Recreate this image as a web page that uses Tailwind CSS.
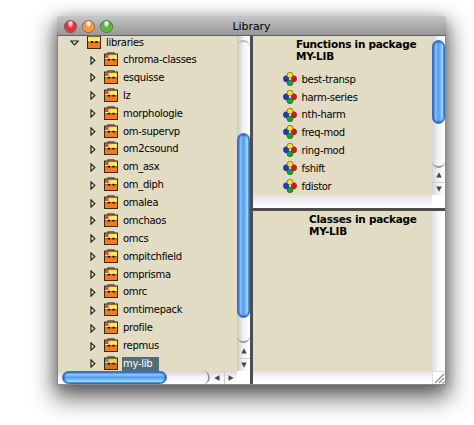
<!DOCTYPE html>
<html lang="en">
<head>
<meta charset="utf-8">
<title>Library</title>
<script src="https://cdn.jsdelivr.net/npm/@tailwindcss/browser@4"></script>
</head>
<body class="w-[474px] h-[425px] overflow-hidden bg-white text-black font-['DejaVu_Sans',Verdana,sans-serif] text-[10px]">
<svg class="absolute w-0 h-0" aria-hidden="true">
  <defs>
    <linearGradient id="yel" x2="0" y2="1"><stop stop-color="#ffdf55"/><stop offset="1" stop-color="#fff083"/></linearGradient>
    <symbol id="case" viewBox="0 0 14 14">
      <path d="M4 2V.8h6V2" fill="none" stroke="#54503f" stroke-width="1.2"/>
      <rect x=".5" y="2" width="13" height="11.5" fill="#f47b20"/>
      <rect x="1" y="2.5" width="12" height="5" fill="url(#yel)"/>
      <rect x="1" y="2.5" width="3.5" height="3.5" fill="currentColor"/>
      <path d="M1 7.7h12" stroke="#5c2c00" stroke-width=".7"/>
      <path d="M4 6.8h2v1.8H4zM8.5 6.8h2v1.8h-2z" fill="#180d00"/>
      <rect x=".5" y="2" width="13" height="11.5" fill="none" stroke="#40280f"/>
    </symbol>
    <symbol id="plaincase" viewBox="0 0 14 14">
      <rect x=".5" y="1" width="13" height="12.5" fill="#f47b20"/>
      <rect x="1" y="1.5" width="12" height="5.5" fill="url(#yel)"/>
      <path d="M1 7h12" stroke="#5c2c00" stroke-width=".7"/>
      <path d="M4 6.1h2v1.8H4zM8.5 6.1h2v1.8h-2z" fill="#180d00"/>
      <rect x=".5" y="1" width="13" height="12.5" fill="none" stroke="#40280f"/>
    </symbol>
    <symbol id="fn" viewBox="0 0 14 14">
      <g stroke-width=".6" stroke="#443f35">
      <circle cx="3.4" cy="6.8" r="3.1" fill="#153bc0"/>
      <circle cx="10.6" cy="6.8" r="3.1" fill="#e80f18"/>
      <circle cx="7" cy="3.3" r="3" fill="#ffe01a"/>
      <circle cx="7" cy="10.7" r="3" fill="#08a926"/></g>
      <circle cx="5" cy="7" r="1.8" fill="#153bc0"/>
      <circle cx="9" cy="7" r="1.8" fill="#e80f18"/>
      <path d="M7 5.7L8.3 7 7 8.3 5.7 7z" fill="#fff"/>
    </symbol>
    <symbol id="tri" viewBox="0 0 6 9"><path d="M1 .9v7.2L4.8 4.5z" fill="#f6f3e6" stroke="#22211d" stroke-width="1.2"/></symbol>
    <symbol id="up" viewBox="0 0 6 6"><path d="M3 .3L5.7 5.5H.3z" fill="#444"/></symbol>
  </defs>
</svg>
<main class="pl-[57px] pt-4">
<div class="w-[389px] h-[369px] flex flex-col rounded-t-[4px] border-x border-b border-[#888] shadow-[0_10px_23px_3px_rgba(0,0,0,0.6),0_3px_12px_rgba(0,0,0,0.2)]">
  <header class="-mx-px h-5 shrink-0 flex items-center rounded-t-[4px] border-t border-[#c5c5c5] border-b border-b-[#626262] bg-linear-to-b from-[#c4c4c4] to-[#979797] pl-[7px] relative">
    <div class="flex gap-[5px]">
      <i class="size-[13px] rounded-full border border-[#80454a] bg-[radial-gradient(ellipse_at_50%_20%,#ffd6d6_0_12%,#e72f3a_42%,#e32a35_65%,#ff9d9d)]"></i>
      <i class="size-[13px] rounded-full border border-[#916034] bg-[radial-gradient(ellipse_at_50%_20%,#fff0da_0_12%,#ed913b_42%,#f4a143_65%,#ffed96)]"></i>
      <i class="size-[13px] rounded-full border border-[#43703a] bg-[radial-gradient(ellipse_at_50%_20%,#e4ffd9_0_12%,#57aa3e_42%,#65b846_65%,#c4f69d)]"></i>
    </div>
    <h1 class="absolute inset-x-0 text-center text-[11px] leading-[18px] top-[1px] tracking-[-0.05px]">Library</h1>
  </header>
  <div class="flex flex-1 min-h-0 bg-[#4d4d4d] gap-[3px]">
    <section class="w-[192px] grid grid-cols-[179px_13px] grid-rows-[335px_13px]">
      <div class="bg-[#e2dcc4] overflow-hidden">
        <div id="tree" class="-mt-[2.4px]">
          <div class="flex h-[17.5px] items-center pl-[12px]">
            <svg class="w-[9px] h-[6px] mt-[1px]" viewBox="0 0 9 6"><path d="M.9 1h7.2L4.5 4.8z" fill="#f6f3e6" stroke="#22211d" stroke-width="1.2"/></svg>
            <svg class="size-3.5 ml-[8px] -mt-[1px]"><use href="#plaincase"/></svg>
            <span class="ml-[5px] tracking-[-0.3px]">libraries</span>
          </div>
        </div>
      </div>
      <div class="flex flex-col bg-linear-to-r from-[#c9c9c9] via-[#f3f3f3] to-white overflow-hidden">
        <div class="h-[97px] rounded-t-full border-t-2 border-[#bbb] mt-1 -mb-1 shrink-0"></div>
        <div class="h-[185px] shrink-0 rounded-full border border-[#3a6cba] bg-[linear-gradient(90deg,#2769d3,#8fc0f4_25%,#559dea_46%,#68b3f8_65%,#a1ddff_85%,#437dca)] shadow-[inset_0_2px_2px_-1px_#1549af,inset_0_-2px_2px_-1px_#1549af]"></div>
        <div class="h-[25px] rounded-b-full border-b-2 border-[#999] shrink-0"></div>
        <div class="h-[15px] flex items-center justify-center"><svg class="size-1.5"><use href="#up"/></svg></div>
        <div class="h-[13px] border-t border-[#ccc] flex items-center justify-center"><svg class="size-1.5 rotate-180"><use href="#up"/></svg></div>
      </div>
      <div class="flex bg-linear-to-b from-[#d7d7d7] via-[#f5f5f5] to-white">
        <div class="w-[4px]"></div>
        <div class="w-[105px] rounded-full border border-[#3a6cba] bg-[linear-gradient(#2769d3,#9ac8f5_25%,#559dea_46%,#68b3f8_65%,#a1e2ff_85%,#437dca)] shadow-[inset_2px_0_2px_-1px_#1549af,inset_-2px_0_2px_-1px_#1549af]"></div>
        <div class="w-[43px] rounded-r-full border-r-2 border-[#999]"></div>
        <div class="w-[14px] flex items-center justify-center"><svg class="size-1.5 -rotate-90"><use href="#up"/></svg></div>
        <div class="w-[13px] border-l border-[#ccc] flex items-center justify-center"><svg class="size-1.5 rotate-90"><use href="#up"/></svg></div>
      </div>
      <div class="bg-white"></div>
    </section>
    <div class="flex-1 flex flex-col gap-[3px]">
      <section class="grid grid-cols-[179px_13px] grid-rows-[159px_13px]">
        <div class="bg-[#e2dcc4] overflow-hidden">
          <h2 class="pl-[43px] pt-[2px] leading-[12px] font-bold text-[10.5px] tracking-[-0.25px]">Functions in package<br>MY-LIB</h2>
          <div id="functions" class="pt-[8px]"></div>
        </div>
        <div class="flex flex-col bg-linear-to-r from-[#d3d3d3] via-[#f3f3f3] to-white">
          <div class="h-[4px]"></div>
          <div class="h-[84px] rounded-full border border-[#3a6cba] bg-[linear-gradient(90deg,#2769d3,#8fc0f4_25%,#559dea_46%,#68b3f8_65%,#a1ddff_85%,#437dca)] shadow-[inset_0_2px_2px_-1px_#1549af,inset_0_-2px_2px_-1px_#1549af]"></div>
          <div class="h-[44px] rounded-b-full border-b-2 border-[#999]"></div>
          <div class="h-[14px] flex items-center justify-center"><svg class="size-1.5"><use href="#up"/></svg></div>
          <div class="h-[13px] border-t border-[#ccc] flex items-center justify-center"><svg class="size-1.5 rotate-180"><use href="#up"/></svg></div>
        </div>
        <div class="bg-linear-to-b from-[#e2e2e2] to-white"></div><div class="bg-white"></div>
      </section>
      <section class="grid grid-cols-[179px_13px] grid-rows-[160px_13px]">
        <div class="bg-[#e2dcc4]"><h2 class="pl-[56px] pt-[2px] leading-[12px] font-bold text-[10.5px] tracking-[-0.25px]">Classes in package<br>MY-LIB</h2></div>
        <div class="bg-linear-to-r from-[#dedede] via-[#f8f8f8] to-white"></div>
        <div class="bg-linear-to-b from-[#e0e0e0] via-[#f8f8f8] to-white"></div>
        <div class="bg-white border-t border-l border-[#ddd]"><svg class="size-3" viewBox="0 0 12 12"><path d="M2 11L11 2M6 11l5-5M9.5 11.5l2-2" stroke="#888" stroke-width="1.1"/></svg></div>
      </section>
    </div>
  </div>
</div>
</main>
<script>
const libraries = ['chroma-classes','esquisse','lz','morphologie','om-supervp','om2csound','om_asx','om_diph','omalea','omchaos','omcs','ompitchfield','omprisma','omrc','omtimepack','profile','repmus','my-lib'];
document.getElementById('tree').insertAdjacentHTML('beforeend', libraries.map(name => {
  const selected = name === 'my-lib';
  return `<div class="flex h-[17.89px] items-center pl-[31.5px]">
    <svg class="w-[6px] h-[9px]"><use href="#tri"/></svg>
    <svg class="size-3.5 ml-[8.5px] -mt-[2px] ${selected ? 'text-[#62b493] brightness-90' : 'text-[#cf514b]'}"><use href="#case"/></svg>
    <span class="ml-[4px] pl-[1px] h-[14px] leading-[14px] tracking-[-0.3px] ${selected ? 'w-[37px] bg-[#536d76] text-white' : ''}">${name}</span></div>`;
}).join(''));
const functions = ['best-transp','harm-series','nth-harm','freq-mod','ring-mod','fshift','fdistor'];
document.getElementById('functions').innerHTML = functions.map(name =>
  `<div class="flex h-[17.85px] items-center pl-[29.5px]"><svg class="size-3.5 shrink-0"><use href="#fn"/></svg><span class="ml-[5px] mt-[0.6px] tracking-[-0.3px]">${name}</span></div>`).join('');
</script>
</body>
</html>
